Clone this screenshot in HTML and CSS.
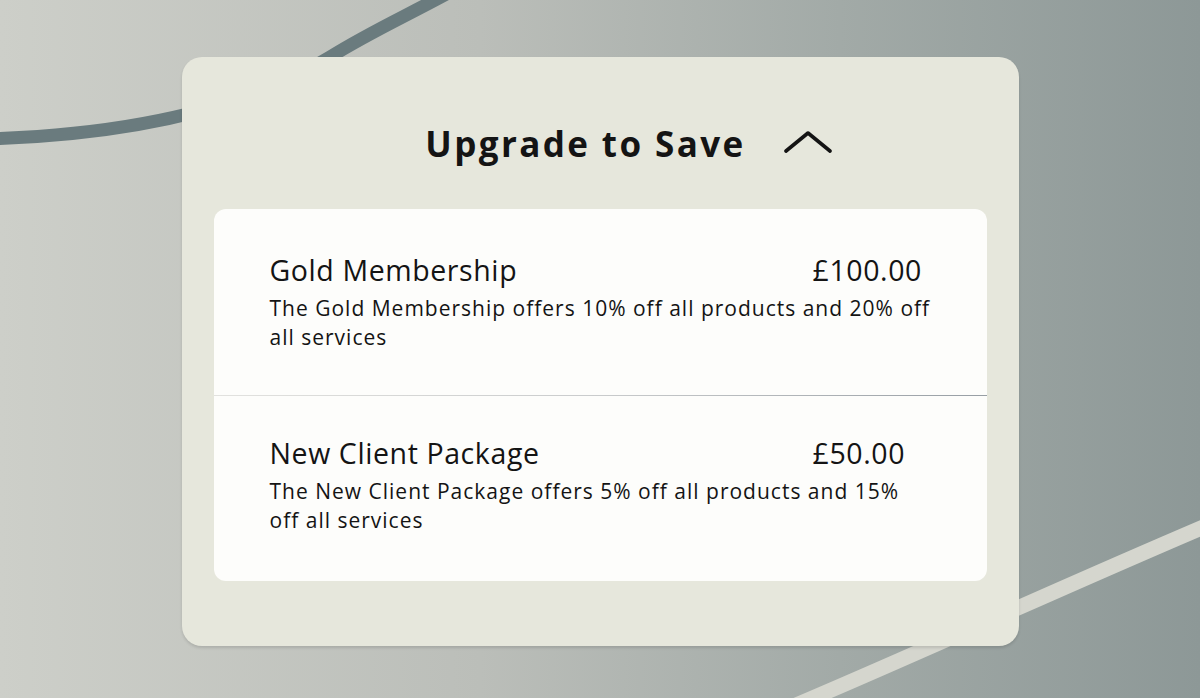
FILE: index.html
```html
<!DOCTYPE html>
<html lang="en">
<head>
  <meta charset="UTF-8" />
  <title>Upgrade to Save</title>
  <link rel="stylesheet" href="styles.css">
</head>
<body>
  <svg class="backdrop" viewBox="0 0 1200 698" preserveAspectRatio="none" aria-hidden="true">
    <path class="line-dark" d="M -20 139 C 150 135, 260 100, 330 57 C 370 32, 410 14, 450 -8" />
    <path class="line-light" d="M 770 716 C 900 662, 1050 592, 1220 520" />
  </svg>

  <div class="panel">
    <div class="panel-head">
      <h2>Upgrade to Save</h2>
      <svg class="chevron" viewBox="0 0 48 26" aria-hidden="true">
        <polyline points="2,21 24,3 46,21" />
      </svg>
    </div>

    <div class="offers">
      <div class="offer">
        <div class="offer-top">
          <span class="offer-name">Gold Membership</span>
          <span class="offer-price">£100.00</span>
        </div>
        <p class="offer-desc">The Gold Membership offers 10% off all products and 20% off all services</p>
      </div>
      <div class="divider"></div>
      <div class="offer">
        <div class="offer-top">
          <span class="offer-name">New Client Package</span>
          <span class="offer-price">£50.00</span>
        </div>
        <p class="offer-desc">The New Client Package offers 5% off all products and 15% off all services</p>
      </div>
    </div>
  </div>
</body>
</html>
```

FILE: styles.css
```css
html, body { margin: 0; height: 100%; }
body {
  font-family: "Open Sans", Lato, sans-serif;
  color: #141414;
  background: linear-gradient(90deg, #cdcfc9 0%, #bbbeb9 40%, #a2aaa7 70%, #8d9897 100%);
  display: flex;
  align-items: center;
  justify-content: center;
  overflow: hidden;
}

.backdrop { position: absolute; top: 0; left: 0; width: 1200px; height: 698px; }
.backdrop path { fill: none; }
.line-dark { stroke: #6a7b7e; stroke-width: 13; }
.line-light { stroke: #d5d6ce; stroke-width: 15; }

.panel {
  position: relative;
  width: 837px;
  box-sizing: border-box;
  padding: 64px 32px 65px;
  background: #e6e7dc;
  border-radius: 20px;
  box-shadow: 0 2px 3px rgba(0, 0, 0, 0.12);
  margin-top: 5px;
}

.panel-head {
  display: flex;
  align-items: center;
  justify-content: center;
  gap: 38px;
  padding-left: 57px;
  height: 44px;
}
.panel-head h2 { margin: 0; font-size: 35px; font-weight: 700; letter-spacing: 2.4px; }
.chevron { width: 48px; height: 26px; }
.chevron polyline { fill: none; stroke: #141414; stroke-width: 3.6; stroke-linecap: round; stroke-linejoin: round; }

.offers {
  margin-top: 44px;
  padding: 4px 0 3px;
  background: #fdfdfb;
  border-radius: 12px;
}

.offer { padding: 41px 56px 43px; }
.offer-top { display: flex; align-items: baseline; height: 32px; line-height: 32px; }
.offer-name { flex: 1; font-size: 28.5px; letter-spacing: 0.6px; }
.offer-price { width: 118px; font-size: 28.5px; letter-spacing: 0.6px; }
.offer-desc { margin: 8px 0 0; max-width: 665px; font-size: 21px; line-height: 29px; letter-spacing: 1px; }

.divider { height: 1px; background: linear-gradient(90deg, #e2e2df, #c9cbcc 50%, #979ea4); }
```
